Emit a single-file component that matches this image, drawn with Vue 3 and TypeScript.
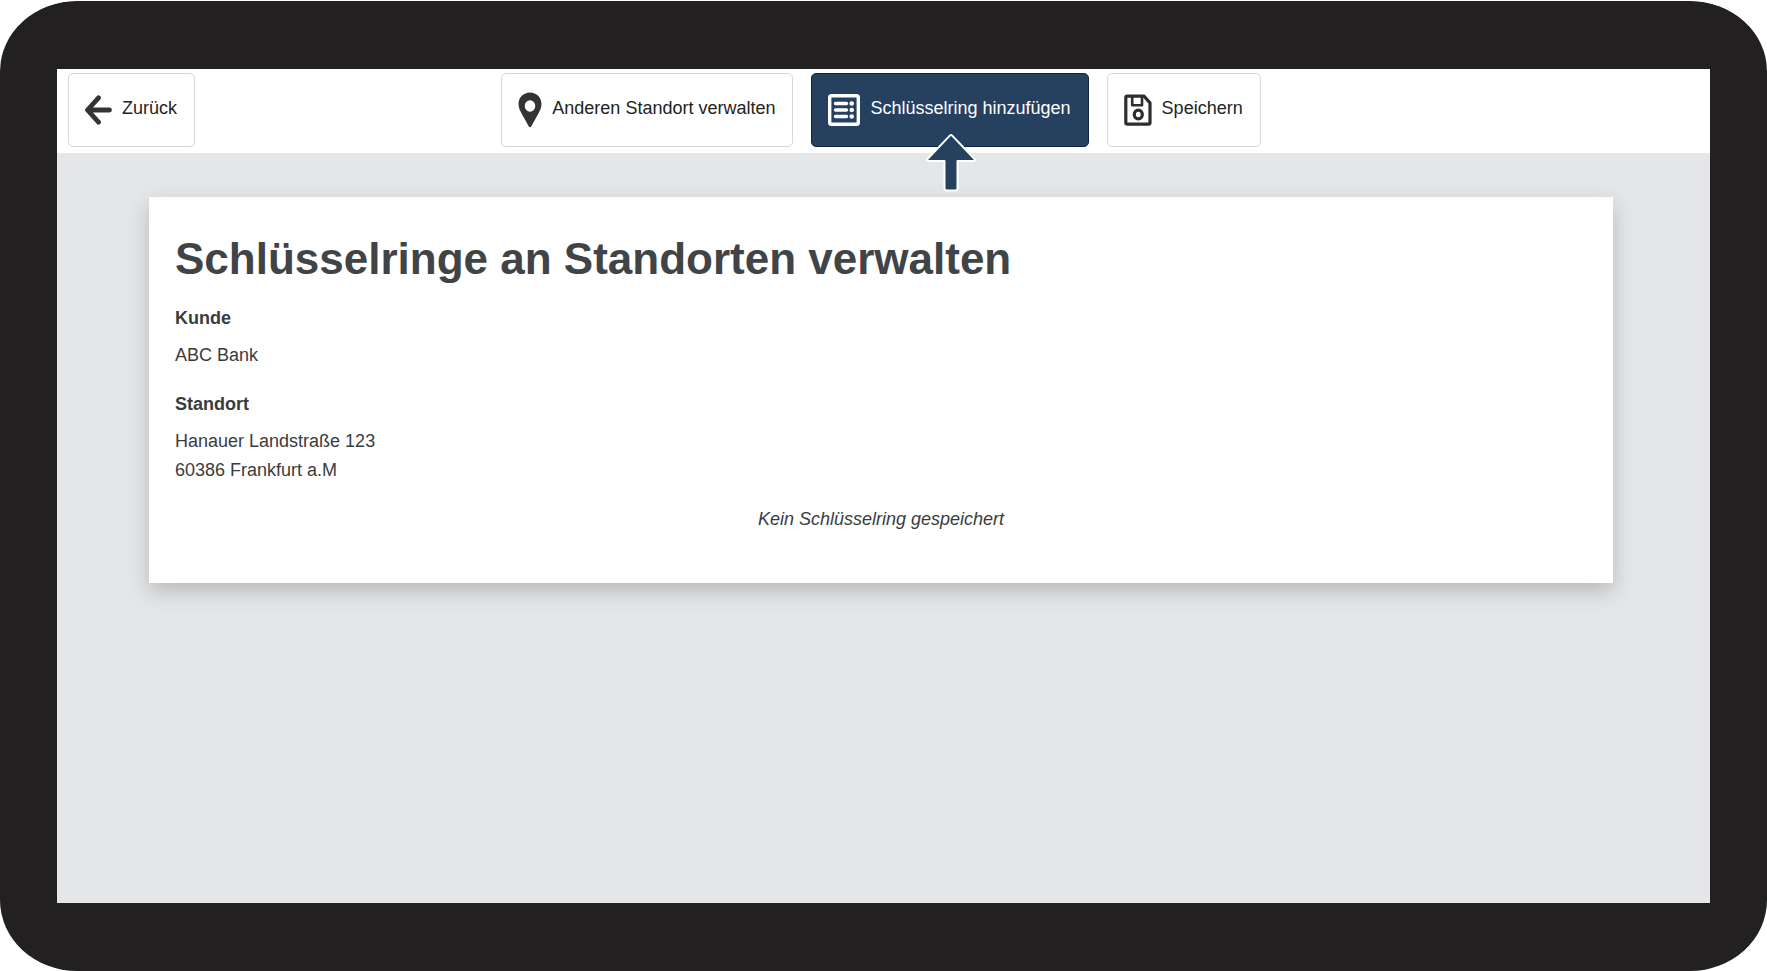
<script setup lang="ts">
interface Location {
  customer: string
  address: string[]
  keyRings: string[]
}

const location: Location = {
  customer: 'ABC Bank',
  address: ['Hanauer Landstraße 123', '60386 Frankfurt a.M'],
  keyRings: [],
}
</script>

<template>
  <div class="device">
    <div class="screen">
      <header class="toolbar">
        <div class="side">
          <button type="button" class="btn">
            <svg width="27" height="30" viewBox="0 0 27 30" aria-hidden="true">
              <path d="M13.500 2.800 2.500 15l11 12.200M3.500 15H24.500" fill="none" stroke="#333436" stroke-width="4.800" stroke-linecap="round" stroke-linejoin="round" />
            </svg>
            <span class="label">Zurück</span>
          </button>
        </div>
        <nav class="actions" aria-label="Aktionen">
          <button type="button" class="btn">
            <svg width="24" height="36" viewBox="0 0 24 36" aria-hidden="true">
              <path fill="#333436" fill-rule="evenodd" d="M12 .5C5.400.5.500 5.500.500 12c0 4 1.800 7 3.500 10.200L10.800 34.500c.6 1 1.800 1 2.400 0L20 22.200C21.700 19 23.500 16 23.500 12 23.500 5.500 18.600.5 12 .5Zm0 7.700a5.300 5.800 0 1 1 0 11.600 5.300 5.800 0 0 1 0-11.600Z" />
            </svg>
            <span class="label">Anderen Standort verwalten</span>
          </button>
          <div class="highlight">
            <button type="button" class="btn primary">
              <svg width="32" height="32" viewBox="0 0 32 32" aria-hidden="true">
                <rect x="1.700" y="1.700" width="28.600" height="28.600" rx="1.800" fill="none" stroke="#fff" stroke-width="3.400" />
                <path d="M7.500 9.500h11M7.500 16h11M7.500 22.500h11" stroke="#fff" stroke-width="3.400" stroke-linecap="round" />
                <g fill="#fff">
                  <circle cx="23.700" cy="9.500" r="2.300" />
                  <circle cx="23.700" cy="16" r="2.300" />
                  <circle cx="23.700" cy="22.500" r="2.300" />
                </g>
              </svg>
              <span class="label">Schlüsselring hinzufügen</span>
            </button>
            <svg class="pointer" width="50" height="60" viewBox="0 0 50 60" aria-hidden="true">
              <path d="M23.800 2.600 1.500 26c-.8 1-.4 2 .8 2H18.500v27.500q0 2 2 2h9q2 0 2-2V28h16.200c1.200 0 1.600-1 .8-2L26.200 2.600q-1.200-1.200-2.400 0Z" fill="#26405f" stroke="#fff" stroke-width="2" stroke-linejoin="round" />
            </svg>
          </div>
          <button type="button" class="btn">
            <svg width="28" height="32" viewBox="0 0 28 32" aria-hidden="true">
              <g fill="none" stroke="#2c2e30" stroke-width="3.200" stroke-linejoin="round">
                <path d="M3.300 2.200H20L26 8.800V28.500q0 1.600-1.500 1.600H3.300q-1.500 0-1.500-1.600V3.800q0-1.600 1.500-1.600Z" />
                <path d="M8.200 3v8.300H18V3" stroke-width="2.600" />
                <ellipse cx="14.300" cy="20.500" rx="4" ry="4.400" />
              </g>
            </svg>
            <span class="label">Speichern</span>
          </button>
        </nav>
      </header>

      <main class="content">
        <section class="card">
          <h1>Schlüsselringe an Standorten verwalten</h1>
          <dl>
            <dt>Kunde</dt>
            <dd>{{ location.customer }}</dd>
            <dt>Standort</dt>
            <dd>
              <div v-for="line in location.address" :key="line">{{ line }}</div>
            </dd>
          </dl>
          <p v-if="location.keyRings.length === 0" class="empty">Kein Schlüsselring gespeichert</p>
        </section>
      </main>
    </div>
  </div>
</template>

<style>
body {
  margin: 0;
  background: #fff;
}
</style>

<style scoped>
.device {
  box-sizing: border-box;
  display: flex;
  min-height: 100vh;
  padding: 68px 57px;
  border-top: 1px solid #fff;
  border-radius: 77px / 71px;
  background: #222021;
  background-clip: padding-box;
  font-family: "Liberation Sans", Arial, sans-serif;
  font-size: 18px;
  line-height: 29px;
  color: #393c3e;
}

.screen {
  flex: 1;
  min-width: 0;
  background: #e5e6e8;
}

.toolbar {
  display: grid;
  grid-template-columns: 1fr auto 1fr;
  padding: 4px 16px 6px 11px;
  background: #fff;
}

.side,
.actions,
.highlight {
  display: flex;
}

.actions {
  gap: 18px;
}

.highlight {
  position: relative;
}

.btn {
  display: flex;
  align-items: center;
  gap: 10px;
  min-height: 74px;
  padding: 0 17px 0 16px;
  border: 1px solid #d6d7d8;
  border-radius: 5px;
  background: #fff;
  color: #222325;
  font: inherit;
  white-space: nowrap;
  cursor: pointer;
}

.btn svg {
  flex: none;
}

.label {
  padding-bottom: 4px;
}

.primary {
  border-color: #0c2547;
  background: #26405f;
  color: #fff;
}

.pointer {
  position: absolute;
  top: 60px;
  left: calc(50% - 24px);
}

.content {
  padding: 44px 97px 44px 92px;
}

.card {
  padding: 36px 26px 49px;
  background: #fff;
  box-shadow: 0 8px 20px rgba(0, 0, 0, 0.2);
}

h1 {
  margin: 0 0 19px;
  font-size: 44px;
  line-height: 52px;
  color: #414446;
}

dl,
dd,
p {
  margin: 0;
}

dt {
  margin-bottom: 8px;
  font-weight: bold;
}

dd {
  margin-bottom: 20px;
}

.empty {
  text-align: center;
  font-style: italic;
}
</style>
